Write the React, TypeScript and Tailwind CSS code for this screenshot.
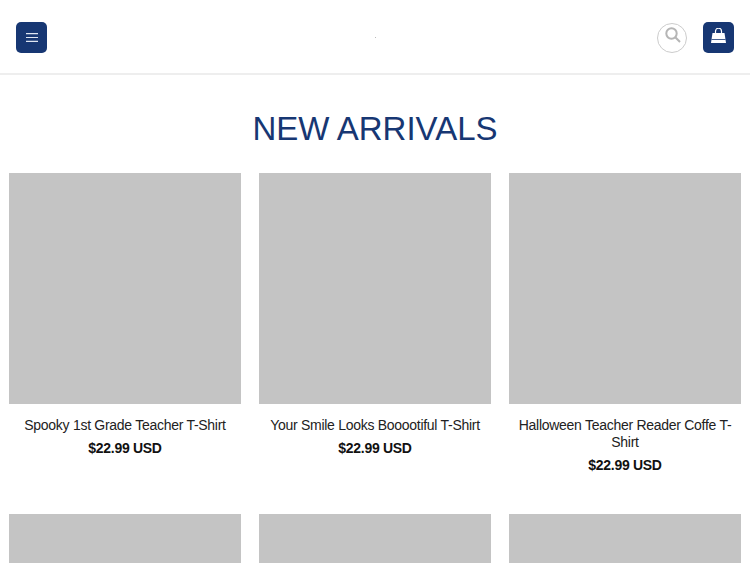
const products = [
  'Spooky 1st Grade Teacher T-Shirt',
  'Your Smile Looks Booootiful T-Shirt',
  'Halloween Teacher Reader Coffe T-Shirt',
]

export default function App() {
  return (
    <div className="h-[563px] overflow-hidden bg-white font-['Liberation_Sans',Arial,sans-serif]">
      <header className="flex h-[75px] items-center border-b-2 border-[#eeeeee] px-4 pt-[2px]">
        <div className="flex flex-1">
          <button className="flex h-[31px] w-[31px] items-center justify-center rounded-[5px] bg-[#173773]">
            <svg width="12" height="9" viewBox="0 0 12 9" fill="none" stroke="#dfe6f2" strokeWidth="1.2">
              <path d="M0 .6h12M0 4.5h12M0 8.4h12" />
            </svg>
          </button>
        </div>
        <div className="mb-px h-px w-px bg-[#bbbbbb]" />
        <div className="flex flex-1 items-center justify-end gap-4">
          <button className="flex h-[30px] w-[30px] items-center justify-center rounded-full border border-[#cccccc]">
            <svg className="mb-[5px] ml-px" width="16" height="16" viewBox="0 0 16 16" fill="none" stroke="#b5b5b5" strokeWidth="2">
              <circle cx="6.5" cy="6.5" r="5.2" />
              <path d="M10.3 10.3L15 15" />
            </svg>
          </button>
          <button className="flex h-[31px] w-[31px] items-center justify-center rounded-[5px] bg-[#173773]">
            <svg className="mb-1" width="15" height="15" viewBox="0 0 15 15" fill="none">
              <path d="M4.5 5.5V3.2a3 3 0 0 1 6 0V5.5" stroke="#ffffff" strokeWidth="1.2" />
              <path d="M1.5 5h12l1.5 10H0z" fill="#ffffff" />
              <path d="M0.5 11.5h14" stroke="#173773" strokeWidth="0.8" />
            </svg>
          </button>
        </div>
      </header>
      <h1 className="pt-[34px] text-center text-[33px] leading-[39px] text-[#173773]">NEW ARRIVALS</h1>
      <div className="mt-[25px] grid grid-cols-3 gap-x-[18px] px-[9px]">
        {products.map((name) => (
          <div key={name} className="h-[341px] text-center">
            <div className="h-[231px] bg-[#c4c4c4]" />
            <p className="mt-[13px] px-1 text-sm leading-[17px] tracking-[-0.28px] text-[#222222]">{name}</p>
            <p className="mt-1.5 text-sm font-bold leading-[17px] tracking-[-0.3px] text-[#111111]">$22.99 USD</p>
          </div>
        ))}
        {products.map((name) => (
          <div key={name} className="h-[231px] bg-[#c4c4c4]" />
        ))}
      </div>
    </div>
  )
}
